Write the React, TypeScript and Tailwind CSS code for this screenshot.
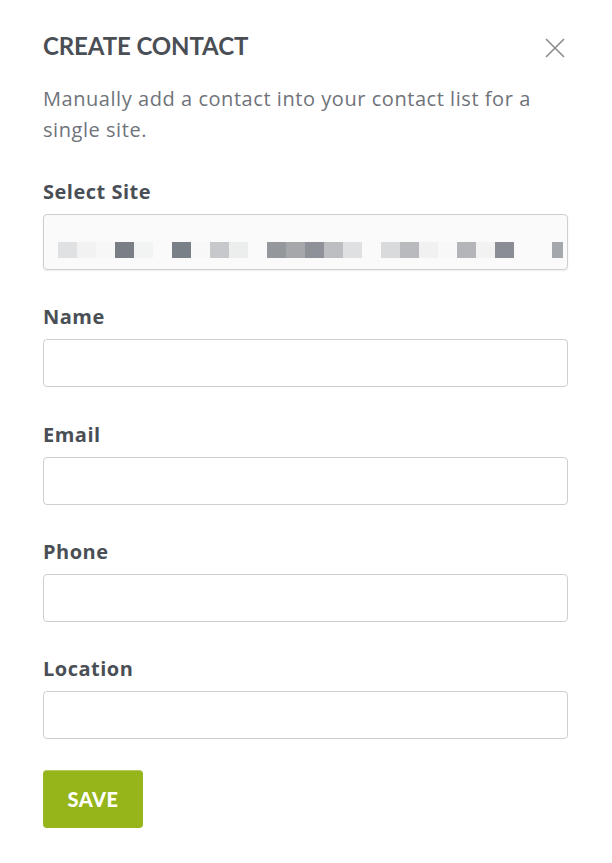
import React from "react";

const cells = [
  "#e0e1e3", "#f2f2f2", "#f7f7f7", "#7a7f86", "#f2f3f3", "transparent",
  "#7a8087", "#f8f8f8", "#c7c8cb", "#eceded", "transparent",
  "#94979c", "#a5a7ab", "#8e9198", "#bdbec1", "#dfe0e1", "transparent",
  "#d9dadb", "#b9babd", "#f1f1f1", "#f8f8f8", "#b3b5b8", "#f2f2f2", "#8a8d94",
  "transparent", "transparent",
];

function Field({ label, children }: { label: string; children?: React.ReactNode }) {
  return (
    <div className="flex flex-col gap-[8px]">
      <label className="text-[20px] leading-[28px] font-bold tracking-[0.5px] text-[#4a4f56]" style={{ fontFamily: '"Open Sans", sans-serif' }}>
        {label}
      </label>
      {children ?? (
        <input
          type="text"
          className="h-[48px] w-full rounded-[4px] border border-[#cfcfcf] bg-white px-3 outline-none"
        />
      )}
    </div>
  );
}

export default function App() {
  return (
    <div className="min-h-[863px] w-[612px] bg-white pl-[43px] pr-[44px] pt-[30px]" style={{ fontFamily: '"Open Sans", sans-serif' }}>
      <div className="flex items-start justify-between">
        <h1 className="text-[24px] leading-[32px] font-bold tracking-[-0.1px] text-[#4a4e55]" style={{ fontFamily: 'Lato, sans-serif' }}>
          CREATE CONTACT
        </h1>
        <button className="mr-[2px] mt-[7px] text-[#8c8c8c]" aria-label="Close">
          <svg width="22" height="22" viewBox="0 0 22 22" fill="none" stroke="currentColor" strokeWidth="1.6">
            <path d="M2 2 L20 20 M20 2 L2 20" />
          </svg>
        </button>
      </div>
      <p className="mt-[21px] text-[20px] leading-[31px] tracking-[0.55px] text-[#6f737a]">
        Manually add a contact into your contact list for a single site.
      </p>
      <div className="mt-[33px] flex flex-col gap-[33.35px]">
        <Field label="Select Site">
          <div className="relative h-[56px] w-full rounded-[4px] border border-[#cfcfcf] bg-[#fafafa] shadow-[0_1px_2px_rgba(0,0,0,0.08)]">
            <div className="flex pl-[14px] pt-[27px]">
              {cells.map((c, i) => (
                <div key={i} className="h-[16px] w-[19px] shrink-0" style={{ backgroundColor: c }} />
              ))}
              <div className="h-[16px] w-[11px] shrink-0 bg-[#a4a7ac]" />
            </div>
          </div>
        </Field>
        <Field label="Name" />
        <Field label="Email" />
        <Field label="Phone" />
        <Field label="Location" />
      </div>
      <div className="mt-[31px]">
        <button
          className="h-[58px] w-[100px] rounded-[4px] bg-[#95b51a] text-[20px] font-black tracking-[0.5px] text-white shadow-[inset_0_1px_0_rgba(255,255,255,0.3)]"
          style={{ fontFamily: 'Lato, sans-serif' }}
        >
          SAVE
        </button>
      </div>
    </div>
  );
}
